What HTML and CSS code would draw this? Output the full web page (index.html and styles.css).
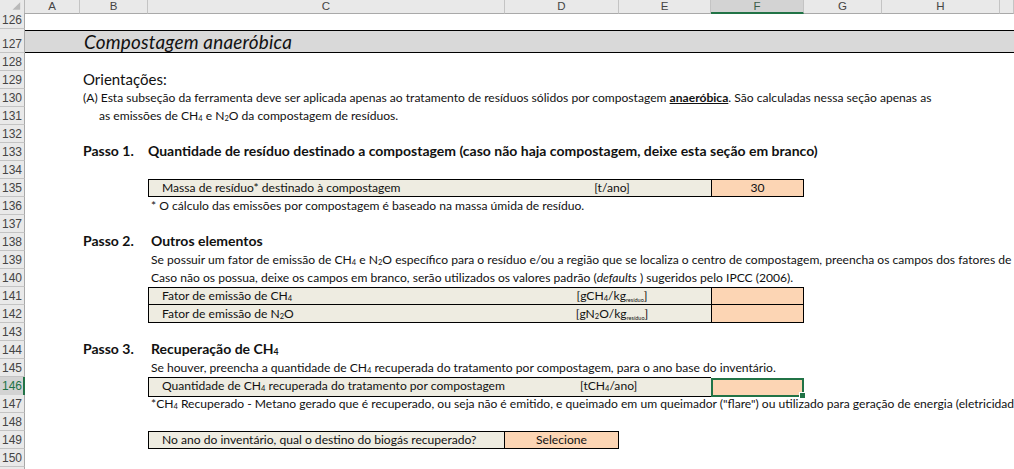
FILE: index.html
```html
<!DOCTYPE html>
<html lang="pt">
<head>
<meta charset="utf-8">
<title>Compostagem anaeróbica</title>
<link rel="stylesheet" href="styles.css">
</head>
<body>
<div class="sheet">
  <div class="row head">
    <div class="corner"><svg width="25" height="13" viewBox="0 0 25 13"><polygon points="21,2 21,10 13,10" fill="#b9b9b9"/></svg></div>
    <div class="ch">A</div><div class="ch">B</div><div class="ch">C</div><div class="ch">D</div><div class="ch">E</div><div class="ch sel">F</div><div class="ch">G</div><div class="ch">H</div><div class="ch"></div>
  </div>
  <div class="row r16"><div class="rh">126</div></div>
  <div class="row r24"><div class="rh">127</div><div class="title">Compostagem anaeróbica</div></div>
  <div class="row"><div class="rh">128</div></div>
  <div class="row"><div class="rh">129</div><div class="txt cB big">Orientações:</div></div>
  <div class="row"><div class="rh">130</div><div class="txt cB">(A) Esta subseção da ferramenta deve ser aplicada apenas ao tratamento de resíduos sólidos por compostagem <b class="ul">anaeróbica</b>. São calculadas nessa seção apenas as</div></div>
  <div class="row"><div class="rh">131</div><div class="txt cB ind">as emissões de CH<sub>4</sub> e N<sub>2</sub>O da compostagem de resíduos.</div></div>
  <div class="row"><div class="rh">132</div></div>
  <div class="row"><div class="rh">133</div><div class="txt cB bold">Passo 1.</div><div class="txt cC bold nopad">Quantidade de resíduo destinado a compostagem (caso não haja compostagem, deixe esta seção em branco)</div></div>
  <div class="row"><div class="rh">134</div></div>
  <div class="row"><div class="rh">135</div>
    <div class="lab bt bb">Massa de resíduo* destinado à compostagem</div>
    <div class="unit bt bb">[t/ano]</div>
    <div class="inp bt bb">30</div>
  </div>
  <div class="row"><div class="rh">136</div><div class="txt cC">* O cálculo das emissões por compostagem é baseado na massa úmida de resíduo.</div></div>
  <div class="row"><div class="rh">137</div></div>
  <div class="row"><div class="rh">138</div><div class="txt cB bold">Passo 2.</div><div class="txt cC bold">Outros elementos</div></div>
  <div class="row"><div class="rh">139</div><div class="txt cC">Se possuir um fator de emissão de CH<sub>4</sub> e N<sub>2</sub>O específico para o resíduo e/ou a região que se localiza o centro de compostagem, preencha os campos dos fatores de emissão</div></div>
  <div class="row"><div class="rh">140</div><div class="txt cC">Caso não os possua, deixe os campos em branco, serão utilizados os valores padrão (<i>defaults</i> ) sugeridos pelo IPCC (2006).</div></div>
  <div class="row"><div class="rh">141</div>
    <div class="lab bt bb">Fator de emissão de CH<sub>4</sub></div>
    <div class="unit bt bb u-small">[gCH<sub>4</sub>/kg<sub class="tiny">resíduo</sub>]</div>
    <div class="inp bt bb"></div>
  </div>
  <div class="row"><div class="rh">142</div>
    <div class="lab bb">Fator de emissão de N<sub>2</sub>O</div>
    <div class="unit bb u-small">[gN<sub>2</sub>O/kg<sub class="tiny">resíduo</sub>]</div>
    <div class="inp bb"></div>
  </div>
  <div class="row"><div class="rh">143</div></div>
  <div class="row"><div class="rh">144</div><div class="txt cB bold">Passo 3.</div><div class="txt cC bold">Recuperação de CH<sub>4</sub></div></div>
  <div class="row"><div class="rh">145</div><div class="txt cC">Se houver, preencha a quantidade de CH<sub>4</sub> recuperada do tratamento por compostagem, para o ano base do inventário.</div></div>
  <div class="row"><div class="rh rsel">146</div>
    <div class="lab bt bb">Quantidade de CH<sub>4</sub> recuperada do tratamento por compostagem</div>
    <div class="unit bt bb u-left">[tCH<sub>4</sub>/ano]</div>
    <div class="inp active"><span class="handle"></span></div>
  </div>
  <div class="row"><div class="rh">147</div><div class="txt cC">*CH<sub>4</sub> Recuperado - Metano gerado que é recuperado, ou seja não é emitido, e queimado em um queimador ("flare") ou utilizado para geração de energia (eletricidade, calor)</div></div>
  <div class="row"><div class="rh">148</div></div>
  <div class="row"><div class="rh">149</div>
    <div class="lab bt bb br">No ano do inventário, qual o destino do biogás recuperado?</div>
    <div class="sel-d bt bb">Selecione</div>
  </div>
  <div class="row"><div class="rh">150</div></div>
  <div class="row"><div class="rh"></div></div>
</div>
</body>
</html>
```

FILE: styles.css
```css
html, body {
  margin: 0;
  padding: 0;
  background: #ffffff;
  overflow: hidden;
}

body {
  width: 1014px;
  height: 469px;
  font-family: Lato, "Open Sans", sans-serif;
  font-size: 12.1px;
  color: #111;
}

.sheet {
  display: flex;
  flex-direction: column;
  width: 1014px;
}

.row {
  display: grid;
  grid-template-columns: 25px 55px 68px 357px 114px 92px 93px 78px 118px 14px;
  height: 18px;
  flex: none;
}

.row.r16 { height: 16px; }
.row.r24 { height: 24px; }

/* column header */
.row.head {
  height: 13px;
  background: #e9e9e9;
}

.corner {
  border-right: 1px solid #b8b8b8;
  border-bottom: 1px solid #a9a9a9;
  box-sizing: border-box;
  display: flex;
}

.ch {
  box-sizing: border-box;
  border-right: 1px solid #c4c4c4;
  border-bottom: 1px solid #a9a9a9;
  font-family: "Liberation Sans", Arial, sans-serif;
  font-size: 11.5px;
  line-height: 12px;
  color: #444;
  text-align: center;
  overflow: hidden;
}

.ch.sel {
  background: #d3d3d3;
  color: #3b5e48;
  border-bottom: 2px solid #217346;
  line-height: 12px;
}

/* row header */
.rh {
  grid-column: 1;
  box-sizing: border-box;
  background: #e9e9e9;
  border-right: 1px solid #a9a9a9;
  border-bottom: 1px solid #c4c4c4;
  font-family: "Liberation Sans", Arial, sans-serif;
  font-size: 12px;
  color: #444;
  text-align: center;
  padding-top: 3px;
  line-height: 13px;
}

.r24 .rh { padding-top: 9px; }
.r16 .rh { padding-top: 1px; }

.rh.rsel {
  background: #d3d3d3;
  color: #217346;
  border-right: 2px solid #217346;
  padding-left: 1px;
}

/* title band */
.title {
  grid-column: 2 / -1;
  background: #d9d9d9;
  border-top: 1px solid #000;
  border-bottom: 1px solid #000;
  box-sizing: border-box;
  margin-top: 1px;
  padding-left: 59px;
  font-style: italic;
  font-size: 18.9px;
  letter-spacing: 0.2px;
  line-height: 21px;
  color: #111;
  white-space: nowrap;
}

/* general text cells */
.txt {
  white-space: nowrap;
  min-width: 0;
  padding-top: 2px;
  line-height: 14px;
}

.cB { grid-column: 3 / -1; padding-left: 3px; }
.cC { grid-column: 4 / -1; padding-left: 3px; }
.cB.bold { grid-column: 3; }
.nopad { padding-left: 0; }

.big { font-size: 15px; padding-top: 1px; }
.ind { padding-left: 19px; }
.bold { font-weight: 700; font-size: 14px; padding-top: 1px; }

b.ul {
  text-decoration: underline;
  text-underline-offset: 1px;
}

sub {
  font-size: 0.62em;
  vertical-align: -0.12em;
  line-height: 0;
}

sub.tiny {
  font-size: 0.46em;
  vertical-align: -0.3em;
}

/* boxes */
.lab, .unit, .inp, .sel-d {
  box-sizing: border-box;
  white-space: nowrap;
  line-height: 14px;
  padding-top: 2px;
}

.lab {
  grid-column: 4;
  background: #eeece1;
  border-left: 1px solid #000;
  padding-left: 13px;
}

.lab.bt, .unit.bt, .inp.bt, .sel-d.bt { padding-top: 1px; }

.unit {
  grid-column: 5 / 7;
  background: #eeece1;
  text-align: center;
  padding-left: 8px;
}

.unit.u-left {
  text-align: left;
  padding-left: 75px;
}

.inp {
  grid-column: 7;
  background: #fcd5b4;
  border-left: 1px solid #000;
  border-right: 1px solid #000;
  text-align: center;
  position: relative;
}

.inp.active {
  border: 2px solid #217346;
  margin-top: 1px;
  height: 19px;
}

.handle {
  position: absolute;
  right: -4px;
  bottom: -4px;
  width: 5px;
  height: 5px;
  background: #217346;
  border: 1px solid #fff;
}

.sel-d {
  grid-column: 5;
  background: #fcd5b4;
  border-right: 1px solid #000;
  text-align: center;
}

.bt { border-top: 1px solid #000; }
.bb { border-bottom: 1px solid #000; }
.br { border-right: 1px solid #000; }
```
